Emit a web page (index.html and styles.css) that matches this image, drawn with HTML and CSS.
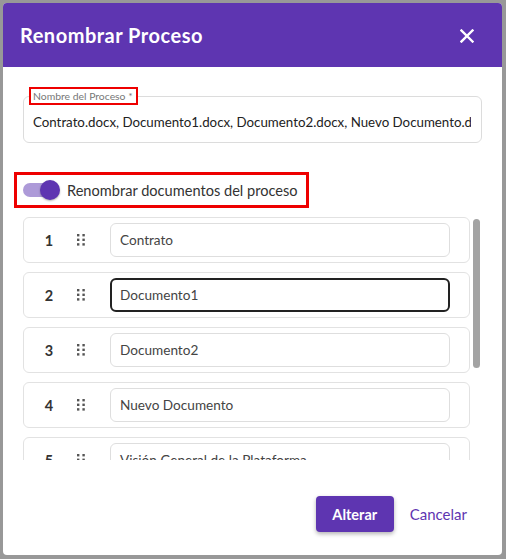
FILE: index.html
```html
<!DOCTYPE html>
<html lang="es">
<head>
<meta charset="utf-8">
<title>Renombrar Proceso</title>
<link rel="stylesheet" href="styles.css">
</head>
<body>
<div class="dialog">
  <header class="dialog-header">
    <h1 class="dialog-title">Renombrar Proceso</h1>
    <button class="close-btn" aria-label="Cerrar">
      <svg width="14" height="14" viewBox="0 0 14 14"><path d="M1.5 1.5 L12.5 12.5 M12.5 1.5 L1.5 12.5" stroke="#fff" stroke-width="2.4" stroke-linecap="square" fill="none"/></svg>
    </button>
  </header>
  <div class="dialog-body">
    <fieldset class="field">
      <legend class="field-label">Nombre del Proceso *</legend>
      <div class="field-value">Contrato.docx, Documento1.docx, Documento2.docx, Nuevo Documento.docx, Visión General de la Plataforma.docx</div>
    </fieldset>

    <div class="toggle-row">
      <span class="switch"><span class="switch-track"></span><span class="switch-thumb"></span></span>
      <span class="toggle-label">Renombrar documentos del proceso</span>
    </div>

    <div class="list-wrap">
      <div class="doc-list">
        <div class="doc-row">
          <span class="doc-num">1</span>
          <span class="drag"><svg width="8" height="12" viewBox="0 0 8 12"><g fill="#555"><rect x="0" y="0" width="2.4" height="2.4"/><rect x="5.4" y="0" width="2.4" height="2.4"/><rect x="0" y="4.6" width="2.4" height="2.4"/><rect x="5.4" y="4.6" width="2.4" height="2.4"/><rect x="0" y="9.2" width="2.4" height="2.4"/><rect x="5.4" y="9.2" width="2.4" height="2.4"/></g></svg></span>
          <div class="doc-input">Contrato</div>
        </div>
        <div class="doc-row">
          <span class="doc-num">2</span>
          <span class="drag"><svg width="8" height="12" viewBox="0 0 8 12"><g fill="#555"><rect x="0" y="0" width="2.4" height="2.4"/><rect x="5.4" y="0" width="2.4" height="2.4"/><rect x="0" y="4.6" width="2.4" height="2.4"/><rect x="5.4" y="4.6" width="2.4" height="2.4"/><rect x="0" y="9.2" width="2.4" height="2.4"/><rect x="5.4" y="9.2" width="2.4" height="2.4"/></g></svg></span>
          <div class="doc-input focused">Documento1</div>
        </div>
        <div class="doc-row">
          <span class="doc-num">3</span>
          <span class="drag"><svg width="8" height="12" viewBox="0 0 8 12"><g fill="#555"><rect x="0" y="0" width="2.4" height="2.4"/><rect x="5.4" y="0" width="2.4" height="2.4"/><rect x="0" y="4.6" width="2.4" height="2.4"/><rect x="5.4" y="4.6" width="2.4" height="2.4"/><rect x="0" y="9.2" width="2.4" height="2.4"/><rect x="5.4" y="9.2" width="2.4" height="2.4"/></g></svg></span>
          <div class="doc-input">Documento2</div>
        </div>
        <div class="doc-row">
          <span class="doc-num">4</span>
          <span class="drag"><svg width="8" height="12" viewBox="0 0 8 12"><g fill="#555"><rect x="0" y="0" width="2.4" height="2.4"/><rect x="5.4" y="0" width="2.4" height="2.4"/><rect x="0" y="4.6" width="2.4" height="2.4"/><rect x="5.4" y="4.6" width="2.4" height="2.4"/><rect x="0" y="9.2" width="2.4" height="2.4"/><rect x="5.4" y="9.2" width="2.4" height="2.4"/></g></svg></span>
          <div class="doc-input">Nuevo Documento</div>
        </div>
        <div class="doc-row">
          <span class="doc-num">5</span>
          <span class="drag"><svg width="8" height="12" viewBox="0 0 8 12"><g fill="#555"><rect x="0" y="0" width="2.4" height="2.4"/><rect x="5.4" y="0" width="2.4" height="2.4"/><rect x="0" y="4.6" width="2.4" height="2.4"/><rect x="5.4" y="4.6" width="2.4" height="2.4"/><rect x="0" y="9.2" width="2.4" height="2.4"/><rect x="5.4" y="9.2" width="2.4" height="2.4"/></g></svg></span>
          <div class="doc-input">Visión General de la Plataforma</div>
        </div>
      </div>
      <div class="scrollbar"><div class="scroll-thumb"></div></div>
    </div>
  </div>
  <footer class="dialog-footer">
    <button class="btn-primary">Alterar</button>
    <button class="btn-text">Cancelar</button>
  </footer>
</div>
</body>
</html>
```

FILE: styles.css
```css
* { box-sizing: border-box; }

html, body {
  margin: 0;
  padding: 0;
  background: #989898;
  font-family: Lato, "Open Sans", sans-serif;
}

body {
  width: 506px;
  height: 559px;
  overflow: hidden;
  padding: 3px 4px 4px 3px;
}

.dialog {
  width: 499px;
  height: 552px;
  background: #fff;
  border-radius: 4px;
  overflow: hidden;
  display: flex;
  flex-direction: column;
}

.dialog-header {
  height: 64px;
  flex: none;
  background: #5e35b1;
  display: flex;
  align-items: center;
  justify-content: space-between;
  padding: 0 28px 0 17px;
}

.dialog-title {
  margin: 0;
  color: #fff;
  font-size: 20px;
  font-weight: 700;
  letter-spacing: 0.5px;
}

.close-btn {
  border: 0;
  background: transparent;
  padding: 0;
  width: 14px;
  height: 14px;
  display: flex;
  margin-top: 1px;
}

.dialog-body {
  flex: 1;
  padding: 20px 20px 0 20px;
  display: flex;
  flex-direction: column;
  min-height: 0;
}

.field {
  margin: 0;
  border: 1px solid #dcdcdc;
  border-radius: 6px;
  padding: 0 10px 3px 5px;
  min-width: 0;
}

.field-label {
  font-size: 10.4px;
  line-height: 14px;
  color: #777;
  border: 2px solid #ee0000;
  padding: 0 3px 0 2px;
  margin-left: 0;
}

.field-value {
  height: 34px;
  line-height: 34px;
  padding-left: 4px;
  font-size: 13.3px;
  color: #222;
  white-space: nowrap;
  overflow: hidden;
}

.toggle-row {
  margin: 29px 0 0 -9px;
  align-self: flex-start;
  height: 36px;
  border: 3px solid #ee0000;
  padding: 0 8px 0 6px;
  display: flex;
  align-items: center;
}

.switch {
  position: relative;
  width: 36px;
  height: 20px;
  display: flex;
  align-items: center;
  margin-right: 8px;
}

.switch-track {
  width: 34px;
  height: 14px;
  border-radius: 7px;
  background: #ad9ad8;
}

.switch-thumb {
  position: absolute;
  right: -1px;
  top: 0;
  width: 20px;
  height: 20px;
  border-radius: 50%;
  background: #5e35b1;
  box-shadow: 0 1px 2px rgba(0,0,0,0.3);
}

.toggle-label {
  font-size: 14.6px;
  color: #333;
}

.list-wrap {
  margin-top: 8px;
  height: 244px;
  display: flex;
  gap: 3px;
}

.doc-list {
  width: 447px;
  flex: none;
  overflow: hidden;
  display: flex;
  flex-direction: column;
  gap: 9px;
  padding-top: 1px;
}

.scrollbar {
  width: 7px;
  flex: none;
  padding-top: 3px;
}

.scroll-thumb {
  height: 149px;
  border-radius: 4px;
  background: #a3a3a3;
}

.doc-row {
  flex: none;
  height: 46px;
  border: 1px solid #e2e2e2;
  border-radius: 6px;
  display: flex;
  align-items: center;
  padding: 0 19px 0 0;
}

.doc-num {
  width: 50px;
  text-align: center;
  font-size: 14.5px;
  font-weight: 700;
  color: #333;
}

.drag {
  margin-left: 3px;
  width: 8px;
  height: 12px;
  display: flex;
}

.doc-input {
  margin-left: 25px;
  flex: 1;
  height: 34px;
  border: 1px solid #dedede;
  border-radius: 6px;
  padding: 0 9px;
  line-height: 32px;
  font-size: 13.6px;
  color: #444;
  white-space: nowrap;
  overflow: hidden;
}

.doc-input.focused {
  border: 2px solid #222;
  padding: 0 8px;
  line-height: 30px;
}

.dialog-footer {
  flex: none;
  display: flex;
  justify-content: flex-end;
  align-items: center;
  gap: 8px;
  padding: 36px 27px 23px 0;
}

.btn-primary {
  height: 36px;
  width: 78px;
  border: 0;
  border-radius: 4px;
  background: #5e35b1;
  color: #fff;
  font-family: Lato, sans-serif;
  font-weight: 700;
  font-size: 14.5px;
  box-shadow: 0 2px 4px rgba(0,0,0,0.3);
}

.btn-text {
  height: 36px;
  border: 0;
  background: transparent;
  color: #5e35b1;
  font-family: Lato, sans-serif;
  font-size: 15px;
  padding: 0 8px;
}
```
